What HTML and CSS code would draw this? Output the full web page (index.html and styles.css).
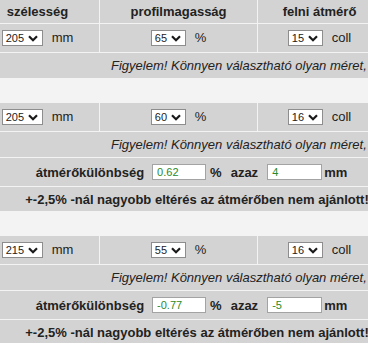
FILE: index.html
```html
<!DOCTYPE html>
<html lang="hu">
<head>
    <meta charset="utf-8">
    <title>Gumiméret kalkulátor</title>
    <link rel="stylesheet" href="styles.css">
</head>
<body>

<table class="sizes">
    <colgroup>
        <col class="c1"><col class="c2"><col class="c3"><col class="c4">
    </colgroup>
    <tr class="head">
        <th>szélesség</th><th>profilmagasság</th><th>felni átmérő</th><th></th>
    </tr>

    <!-- eredeti méret -->
    <tr class="pick">
        <td><span class="sel">205<svg viewBox="0 0 10 7"><path d="M1 1.2 5 5.2 9 1.2"/></svg></span> mm</td>
        <td><span class="sel">65<svg viewBox="0 0 10 7"><path d="M1 1.2 5 5.2 9 1.2"/></svg></span> %</td>
        <td><span class="sel">15<svg viewBox="0 0 10 7"><path d="M1 1.2 5 5.2 9 1.2"/></svg></span> coll</td>
        <td></td>
    </tr>
    <tr class="note"><td colspan="4">Figyelem! Könnyen választható olyan méret, ami nem létezik!</td></tr>
    <tr class="gap"><td colspan="4"></td></tr>

    <!-- 1. alternatíva -->
    <tr class="pick">
        <td><span class="sel">205<svg viewBox="0 0 10 7"><path d="M1 1.2 5 5.2 9 1.2"/></svg></span> mm</td>
        <td><span class="sel">60<svg viewBox="0 0 10 7"><path d="M1 1.2 5 5.2 9 1.2"/></svg></span> %</td>
        <td><span class="sel">16<svg viewBox="0 0 10 7"><path d="M1 1.2 5 5.2 9 1.2"/></svg></span> coll</td>
        <td></td>
    </tr>
    <tr class="note"><td colspan="4">Figyelem! Könnyen választható olyan méret, ami nem létezik!</td></tr>
    <tr class="diff">
        <td colspan="4">
            <div class="diffline">
                <span class="lbl">átmérőkülönbség</span>
                <input type="text" class="num" value="0.62">
                <span class="unit">%</span>
                <span class="azaz">azaz</span>
                <input type="text" class="num wide" value="4">
                <span class="mm">mm</span>
            </div>
        </td>
    </tr>
    <tr class="warn"><td colspan="4">+-2,5% -nál nagyobb eltérés az átmérőben nem ajánlott!</td></tr>
    <tr class="gap"><td colspan="4"></td></tr>

    <!-- 2. alternatíva -->
    <tr class="pick">
        <td><span class="sel">215<svg viewBox="0 0 10 7"><path d="M1 1.2 5 5.2 9 1.2"/></svg></span> mm</td>
        <td><span class="sel">55<svg viewBox="0 0 10 7"><path d="M1 1.2 5 5.2 9 1.2"/></svg></span> %</td>
        <td><span class="sel">16<svg viewBox="0 0 10 7"><path d="M1 1.2 5 5.2 9 1.2"/></svg></span> coll</td>
        <td></td>
    </tr>
    <tr class="note"><td colspan="4">Figyelem! Könnyen választható olyan méret, ami nem létezik!</td></tr>
    <tr class="diff">
        <td colspan="4">
            <div class="diffline">
                <span class="lbl">átmérőkülönbség</span>
                <input type="text" class="num" value="-0.77">
                <span class="unit">%</span>
                <span class="azaz">azaz</span>
                <input type="text" class="num wide" value="-5">
                <span class="mm">mm</span>
            </div>
        </td>
    </tr>
    <tr class="warn"><td colspan="4">+-2,5% -nál nagyobb eltérés az átmérőben nem ajánlott!</td></tr>
</table>

</body>
</html>
```

FILE: styles.css
```css
    /* Alap
    ---------------------------------------------------------------- */
    html, body {
        margin: 0;
        padding: 0;
        overflow: hidden;
        }
    body {
        background: #f3f3f3;
        font: 13px "Liberation Sans", Arial, Helvetica, sans-serif;
        color: #222;
        }

    /* Méret tábla
    ---------------------------------------------------------------- */
    table.sizes {
        table-layout: fixed;
        width: 444px;
        border-collapse: separate;
        border-spacing: 1px;
        margin: -1px 0 0 -25px;
        }
    .sizes col.c1 { width: 123px; }
    .sizes col.c2 { width: 157px; }
    .sizes col.c3 { width: 123px; }
    .sizes col.c4 { width: 36px; }

    .sizes th, .sizes td {
        padding: 0;
        background: #d3d3d3;
        text-align: center;
        vertical-align: middle;
        white-space: nowrap;
        }
    .sizes th {
        height: 23px;
        font-weight: bold;
        }
    tr.pick td { height: 28px; }
    tr.note td {
        height: 25px;
        font-style: italic;
        text-align: left;
        padding-left: 135px;
        }
    tr.gap td {
        height: 23px;
        background: none;
        }
    tr.diff td {
        height: 28px;
        font-weight: bold;
        }
    tr.warn td {
        height: 24px;
        font-weight: bold;
        }

    /* Legördülők
    ---------------------------------------------------------------- */
    .sel {
        display: inline-flex;
        align-items: center;
        box-sizing: border-box;
        height: 16px;
        padding: 0 4px 0 3px;
        margin-right: 5px;
        border: 1px solid #8d8d8d;
        background: #fff;
        font-size: 11px;
        color: #222;
        vertical-align: middle;
        }
        .sel svg {
            width: 10px;
            height: 7px;
            margin-left: 4px;
            fill: none;
            stroke: #1a1a1a;
            stroke-width: 2.2;
            }

    /* Átmérő különbség sor
    ---------------------------------------------------------------- */
    .diffline {
        display: flex;
        justify-content: center;
        align-items: center;
        padding-right: 11px;
        }
    input.num {
        box-sizing: border-box;
        width: 54px;
        height: 16px;
        margin: 0 4px 0 8px;
        padding: 0 0 0 4px;
        border: 1px solid #a3a3a3;
        background: #fff;
        font: 11px "Liberation Sans", Arial, sans-serif;
        color: #2a8a2a;
        }
    input.num.wide {
        width: 55px;
        margin: 0 2px 0 9px;
        }
    .azaz { margin-left: 9px; }
```
